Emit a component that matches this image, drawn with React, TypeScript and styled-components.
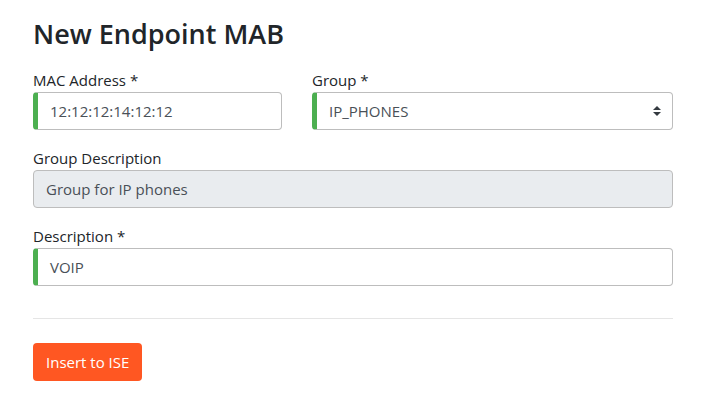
import React from "react";
import styled, { createGlobalStyle } from "styled-components";

const Global = createGlobalStyle`
  html, body { margin: 0; padding: 0; background: #fff; }
  body {
    font-family: "Open Sans", "Noto Sans", Arial, sans-serif;
    font-size: 15px;
    line-height: 1.5;
    color: #212529;
  }
  * { box-sizing: border-box; }
`;

const Page = styled.div`
  width: 640px;
  margin-left: 33px;
  padding-top: 17px;
`;

const Title = styled.h3`
  margin: 0 0 17px;
  font-size: 27px;
  font-weight: 600;
  line-height: 34px;
  color: #212529;
`;

const Row = styled.div`
  display: grid;
  grid-template-columns: 249px 361px;
  column-gap: 30px;
`;

const Group = styled.div`
  margin-bottom: 16px;
`;

const Label = styled.label`
  display: block;
  font-size: 15px;
  line-height: 24px;
  color: #212529;
`;

const Field = styled.div<{ $valid?: boolean; $disabled?: boolean }>`
  position: relative;
  height: 38px;
  display: flex;
  align-items: center;
  padding: 0 12px;
  border: 1px solid #bdbdbd;
  border-left: ${(p) => (p.$valid ? "5px solid #4caf50" : "1px solid #bdbdbd")};
  border-radius: 4px;
  background: ${(p) => (p.$disabled ? "#e9ecef" : "#fff")};
  color: #495057;
  font-size: 15px;
`;

const Caret = styled.svg`
  position: absolute;
  right: 11px;
  top: 50%;
  transform: translateY(-50%);
`;

const Divider = styled.hr`
  margin: 32px 0 24px;
  border: 0;
  border-top: 1px solid #e5e5e5;
`;

const Button = styled.button`
  height: 38px;
  padding: 0 13px;
  border: 0;
  border-radius: 4px;
  background: #ff5722;
  color: #fff;
  font-family: inherit;
  font-size: 15px;
  cursor: pointer;
`;

export default function App() {
  return (
    <>
      <Global />
      <Page>
        <Title>New Endpoint MAB</Title>
        <Row>
          <Group>
            <Label>MAC Address *</Label>
            <Field $valid>12:12:12:14:12:12</Field>
          </Group>
          <Group>
            <Label>Group *</Label>
            <Field $valid>
              IP_PHONES
              <Caret width="8" height="10" viewBox="0 0 8 10">
                <path d="M4 0 L8 4 H0 Z M4 10 L0 6 H8 Z" fill="#343a40" />
              </Caret>
            </Field>
          </Group>
        </Row>
        <Group>
          <Label>Group Description</Label>
          <Field $disabled>Group for IP phones</Field>
        </Group>
        <Group>
          <Label>Description *</Label>
          <Field $valid>VOIP</Field>
        </Group>
        <Divider />
        <Button>Insert to ISE</Button>
      </Page>
    </>
  );
}
